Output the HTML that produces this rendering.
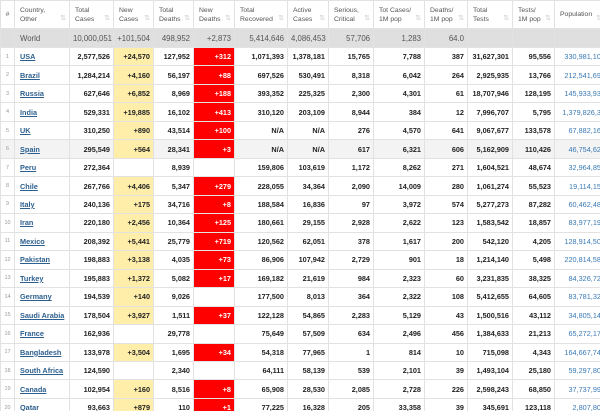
<!DOCTYPE html>
<html><head><meta charset="utf-8"><style>
html,body{margin:0;padding:0;width:600px;height:411px;overflow:hidden;background:#fff}
table{border-collapse:collapse;table-layout:fixed;width:605px;font-family:"Liberation Sans",Arial,sans-serif;font-size:7.3px;font-weight:bold;color:#222}
td,th{border:1px solid #e2e2e2;padding:0 3px;text-align:right;white-space:nowrap;overflow:hidden}
th{font-weight:normal;color:#555;text-align:left;vertical-align:middle;font-size:6.8px;line-height:9px;height:27px;position:relative;padding-left:5px}
th i{position:absolute;right:3px;bottom:5px;font-style:normal;color:#ccc;font-size:7px}
tr.r td{height:17.47px}
tr.w td{background:#dfdfdf;color:#555;font-weight:normal;font-size:7.8px;height:18px}
td.n{color:#999;font-weight:normal;font-size:5.5px;text-align:center;padding:0}
td.c{text-align:left;padding-left:5px}
td.c a{color:#2c5f8e;text-decoration:underline;font-size:7.3px}
td.y{background:#ffeeaa}
td.d{background:#ff0000;color:#fff}
td.p{color:#3a7ab5;font-weight:normal;text-align:right;padding-right:0}
tr.g td{background:#f3f3f3}
tr.g td.y{background:#ffeeaa}tr.g td.d{background:#f00}
</style></head><body>
<table>
<colgroup><col style="width:14px"><col style="width:55px"><col style="width:44px"><col style="width:40px"><col style="width:40px"><col style="width:41px"><col style="width:53px"><col style="width:41px"><col style="width:45px"><col style="width:51px"><col style="width:43px"><col style="width:45px"><col style="width:42px"><col style="width:51px"></colgroup>
<tr><th style="padding:0;text-align:center">#</th><th>Country,<br>Other<i>⇅</i></th><th>Total<br>Cases<i>⇅</i></th><th>New<br>Cases<i>⇅</i></th><th>Total<br>Deaths<i>⇅</i></th><th>New<br>Deaths<i>⇅</i></th><th>Total<br>Recovered<i>⇅</i></th><th>Active<br>Cases<i>⇅</i></th><th>Serious,<br>Critical<i>⇅</i></th><th>Tot Cases/<br>1M pop<i>⇅</i></th><th>Deaths/<br>1M pop<i>⇅</i></th><th>Total<br>Tests<i>⇅</i></th><th>Tests/<br>1M pop<i>⇅</i></th><th>Population<i>⇅</i></th></tr>
<tr class="w"><td></td><td style="text-align:left;padding-left:5px">World</td><td>10,000,051</td><td>+101,504</td><td>498,952</td><td>+2,873</td><td>5,414,646</td><td>4,086,453</td><td>57,706</td><td>1,283</td><td>64.0</td><td></td><td></td><td></td></tr>
<tr class="r"><td class="n">1</td><td class="c"><a>USA</a></td><td>2,577,526</td><td class="y">+24,570</td><td>127,952</td><td class="d">+312</td><td>1,071,393</td><td>1,378,181</td><td>15,765</td><td>7,788</td><td>387</td><td>31,627,301</td><td>95,556</td><td class="p">330,981,102</td></tr>
<tr class="r"><td class="n">2</td><td class="c"><a>Brazil</a></td><td>1,284,214</td><td class="y">+4,160</td><td>56,197</td><td class="d">+88</td><td>697,526</td><td>530,491</td><td>8,318</td><td>6,042</td><td>264</td><td>2,925,935</td><td>13,766</td><td class="p">212,541,698</td></tr>
<tr class="r"><td class="n">3</td><td class="c"><a>Russia</a></td><td>627,646</td><td class="y">+6,852</td><td>8,969</td><td class="d">+188</td><td>393,352</td><td>225,325</td><td>2,300</td><td>4,301</td><td>61</td><td>18,707,946</td><td>128,195</td><td class="p">145,933,933</td></tr>
<tr class="r"><td class="n">4</td><td class="c"><a>India</a></td><td>529,331</td><td class="y">+19,885</td><td>16,102</td><td class="d">+413</td><td>310,120</td><td>203,109</td><td>8,944</td><td>384</td><td>12</td><td>7,996,707</td><td>5,795</td><td class="p">1,379,826,34</td></tr>
<tr class="r"><td class="n">5</td><td class="c"><a>UK</a></td><td>310,250</td><td class="y">+890</td><td>43,514</td><td class="d">+100</td><td>N/A</td><td>N/A</td><td>276</td><td>4,570</td><td>641</td><td>9,067,677</td><td>133,578</td><td class="p">67,882,162</td></tr>
<tr class="r g"><td class="n">6</td><td class="c"><a>Spain</a></td><td>295,549</td><td class="y">+564</td><td>28,341</td><td class="d">+3</td><td>N/A</td><td>N/A</td><td>617</td><td>6,321</td><td>606</td><td>5,162,909</td><td>110,426</td><td class="p">46,754,621</td></tr>
<tr class="r"><td class="n">7</td><td class="c"><a>Peru</a></td><td>272,364</td><td></td><td>8,939</td><td></td><td>159,806</td><td>103,619</td><td>1,172</td><td>8,262</td><td>271</td><td>1,604,521</td><td>48,674</td><td class="p">32,964,851</td></tr>
<tr class="r"><td class="n">8</td><td class="c"><a>Chile</a></td><td>267,766</td><td class="y">+4,406</td><td>5,347</td><td class="d">+279</td><td>228,055</td><td>34,364</td><td>2,090</td><td>14,009</td><td>280</td><td>1,061,274</td><td>55,523</td><td class="p">19,114,151</td></tr>
<tr class="r"><td class="n">9</td><td class="c"><a>Italy</a></td><td>240,136</td><td class="y">+175</td><td>34,716</td><td class="d">+8</td><td>188,584</td><td>16,836</td><td>97</td><td>3,972</td><td>574</td><td>5,277,273</td><td>87,282</td><td class="p">60,462,481</td></tr>
<tr class="r"><td class="n">10</td><td class="c"><a>Iran</a></td><td>220,180</td><td class="y">+2,456</td><td>10,364</td><td class="d">+125</td><td>180,661</td><td>29,155</td><td>2,928</td><td>2,622</td><td>123</td><td>1,583,542</td><td>18,857</td><td class="p">83,977,191</td></tr>
<tr class="r"><td class="n">11</td><td class="c"><a>Mexico</a></td><td>208,392</td><td class="y">+5,441</td><td>25,779</td><td class="d">+719</td><td>120,562</td><td>62,051</td><td>378</td><td>1,617</td><td>200</td><td>542,120</td><td>4,205</td><td class="p">128,914,503</td></tr>
<tr class="r"><td class="n">12</td><td class="c"><a>Pakistan</a></td><td>198,883</td><td class="y">+3,138</td><td>4,035</td><td class="d">+73</td><td>86,906</td><td>107,942</td><td>2,729</td><td>901</td><td>18</td><td>1,214,140</td><td>5,498</td><td class="p">220,814,585</td></tr>
<tr class="r"><td class="n">13</td><td class="c"><a>Turkey</a></td><td>195,883</td><td class="y">+1,372</td><td>5,082</td><td class="d">+17</td><td>169,182</td><td>21,619</td><td>984</td><td>2,323</td><td>60</td><td>3,231,835</td><td>38,325</td><td class="p">84,326,721</td></tr>
<tr class="r"><td class="n">14</td><td class="c"><a>Germany</a></td><td>194,539</td><td class="y">+140</td><td>9,026</td><td></td><td>177,500</td><td>8,013</td><td>364</td><td>2,322</td><td>108</td><td>5,412,655</td><td>64,605</td><td class="p">83,781,321</td></tr>
<tr class="r"><td class="n">15</td><td class="c"><a>Saudi Arabia</a></td><td>178,504</td><td class="y">+3,927</td><td>1,511</td><td class="d">+37</td><td>122,128</td><td>54,865</td><td>2,283</td><td>5,129</td><td>43</td><td>1,500,516</td><td>43,112</td><td class="p">34,805,141</td></tr>
<tr class="r"><td class="n">16</td><td class="c"><a>France</a></td><td>162,936</td><td></td><td>29,778</td><td></td><td>75,649</td><td>57,509</td><td>634</td><td>2,496</td><td>456</td><td>1,384,633</td><td>21,213</td><td class="p">65,272,171</td></tr>
<tr class="r"><td class="n">17</td><td class="c"><a>Bangladesh</a></td><td>133,978</td><td class="y">+3,504</td><td>1,695</td><td class="d">+34</td><td>54,318</td><td>77,965</td><td>1</td><td>814</td><td>10</td><td>715,098</td><td>4,343</td><td class="p">164,667,741</td></tr>
<tr class="r"><td class="n">18</td><td class="c"><a>South Africa</a></td><td>124,590</td><td></td><td>2,340</td><td></td><td>64,111</td><td>58,139</td><td>539</td><td>2,101</td><td>39</td><td>1,493,104</td><td>25,180</td><td class="p">59,297,801</td></tr>
<tr class="r"><td class="n">19</td><td class="c"><a>Canada</a></td><td>102,954</td><td class="y">+160</td><td>8,516</td><td class="d">+8</td><td>65,908</td><td>28,530</td><td>2,085</td><td>2,728</td><td>226</td><td>2,598,243</td><td>68,850</td><td class="p">37,737,991</td></tr>
<tr class="r"><td class="n">20</td><td class="c"><a>Qatar</a></td><td>93,663</td><td class="y">+879</td><td>110</td><td class="d">+1</td><td>77,225</td><td>16,328</td><td>205</td><td>33,358</td><td>39</td><td>345,691</td><td>123,118</td><td class="p">2,807,805</td></tr>
</table>
</body></html>
